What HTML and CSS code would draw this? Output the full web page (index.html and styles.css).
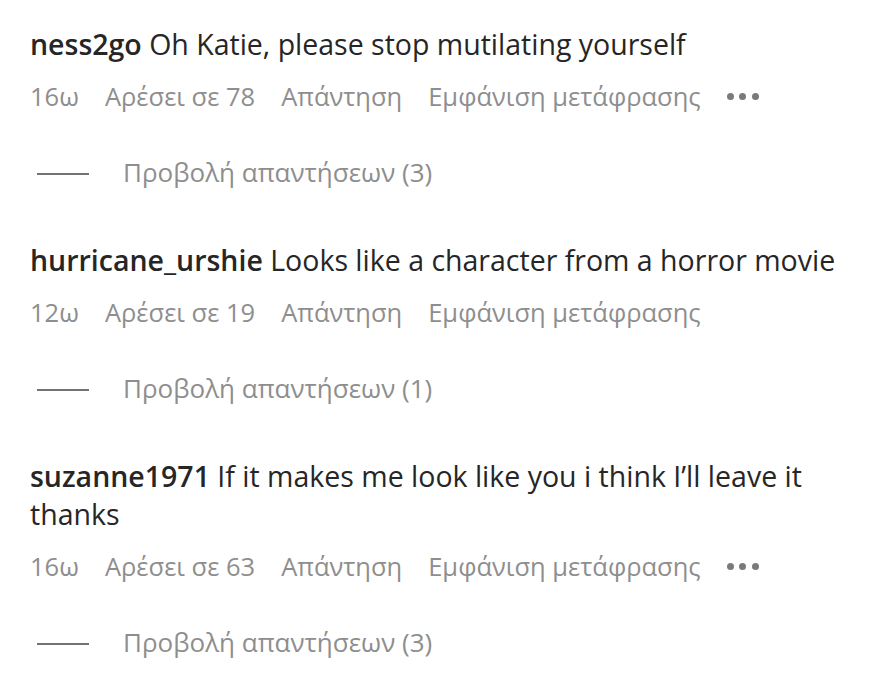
FILE: index.html
```html
<!doctype html>
<html lang="el">
  <head>
    <title>Σχόλια</title>
    <link rel="stylesheet" href="styles.css">
  </head>
  <body>
    <ul class="comments">
      <li class="comment">
        <p class="comment-text"><span class="user">ness2go</span> Oh Katie, please stop mutilating yourself</p>
        <div class="meta">
          <span>16ω</span>
          <span>Αρέσει σε 78</span>
          <span>Απάντηση</span>
          <span>Εμφάνιση μετάφρασης</span>
          <span class="more"><i></i><i></i><i></i></span>
        </div>
        <div class="replies">
          <span class="dash"></span>
          <span>Προβολή απαντήσεων (3)</span>
        </div>
      </li>
      <li class="comment">
        <p class="comment-text"><span class="user">hurricane_urshie</span> Looks like a character from a horror movie</p>
        <div class="meta">
          <span>12ω</span>
          <span>Αρέσει σε 19</span>
          <span>Απάντηση</span>
          <span>Εμφάνιση μετάφρασης</span>
        </div>
        <div class="replies">
          <span class="dash"></span>
          <span>Προβολή απαντήσεων (1)</span>
        </div>
      </li>
      <li class="comment">
        <p class="comment-text"><span class="user">suzanne1971</span> If it makes me look like you i think I’ll leave it thanks</p>
        <div class="meta">
          <span>16ω</span>
          <span>Αρέσει σε 63</span>
          <span>Απάντηση</span>
          <span>Εμφάνιση μετάφρασης</span>
          <span class="more"><i></i><i></i><i></i></span>
        </div>
        <div class="replies">
          <span class="dash"></span>
          <span>Προβολή απαντήσεων (3)</span>
        </div>
      </li>
    </ul>
  </body>
</html>
```

FILE: styles.css
```css
body,
html {
  margin: 0;
  background-color: #fff;
  color: #262626;
  font-family: "Open Sans", "Noto Sans", sans-serif;
}

.comments {
  list-style: none;
  margin: 0;
  padding: 25px 30px 0;
}

.comment {
  margin-bottom: 54px;
}

.comment-text {
  margin: 0;
  font-size: 28.5px;
  line-height: 38px;
  max-width: 820px;
}

.user {
  font-weight: 600;
}

.meta {
  display: flex;
  align-items: center;
  gap: 26px;
  margin-top: 18px;
  font-size: 25.5px;
  line-height: 30px;
  color: #8e8e8e;
}

.more {
  display: flex;
  gap: 5.5px;
}

.more i {
  width: 7px;
  height: 7px;
  border-radius: 50%;
  background-color: #7a7a7a;
}

.replies {
  display: flex;
  align-items: center;
  margin-top: 46px;
  font-size: 26px;
  line-height: 30px;
  color: #8e8e8e;
}

.dash {
  width: 52px;
  height: 2px;
  margin: 4px 34px 0 7px;
  background-color: #737373;
}
```
